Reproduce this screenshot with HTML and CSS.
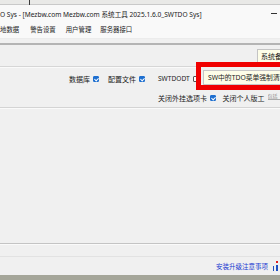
FILE: index.html
```html
<!DOCTYPE html>
<html>
<head>
<meta charset="utf-8">
<link rel="stylesheet" href="styles.css">
</head>
<body>
<div class="screen">
  <div class="topstrip"><span class="tick"></span></div>
  <div class="titlebar">
    <span class="title">O Sys - [Mezbw.com Mezbw.com 系统工具 2025.1.6.0_SWTDO Sys]</span>
    <span class="minimize"></span>
  </div>
  <div class="menubar">
    <span class="menu m1">地数据</span>
    <span class="menu m2">警告设置</span>
    <span class="menu m3">用户管理</span>
    <span class="menu m4">服务器接口</span>
  </div>
  <div class="panel">
    <div class="toolrow">
      <span class="btn">系统备</span>
    </div>
    <div class="sep"></div>
    <div class="optrow row1">
      <span class="lbl first">数据库</span><span class="cb on"></span>
      <span class="lbl">配置文件</span><span class="cb on"></span>
      <span class="lbl latin">SWTDODT</span><span class="cb"></span>
      <div class="redbox"><div class="yellow">SW中的TDO菜单强制清理</div></div>
    </div>
    <div class="optrow row2">
      <span class="lbl first">关闭外挂选项卡</span><span class="cb on"></span>
      <span class="lbl">关闭个人版工</span><span class="hint">包括</span>
    </div>
    <div class="sep2"></div>
    <div class="body"></div>
    <div class="sep3"></div>
    <div class="footer">
      <span class="link">安装升级注意事项</span>
      <span class="flag"><i class="r"></i><i class="b1"></i><i class="b2"></i></span>
    </div>
  </div>
  <div class="taskbar"></div>
</div>
</body>
</html>
```
FILE: styles.css
```css
html, body {
  margin: 0;
  padding: 0;
}
body {
  width: 280px;
  height: 280px;
  overflow: hidden;
  background: #f0f0f0;
  font-family: "Noto Sans", "Noto Sans CJK SC", sans-serif;
  color: #1a1a1a;
}
.screen {
  width: 280px;
  height: 280px;
  display: flex;
  flex-direction: column;
  overflow: hidden;
}
.topstrip {
  height: 4px;
  background: #e9e9e7;
  border-bottom: 1px solid #c9c9c9;
  position: relative;
}
.tick {
  position: absolute;
  left: 29px;
  top: 0;
  width: 1px;
  height: 5px;
  background: #3a3a3a;
}
.titlebar {
  height: 16px;
  background: #f9f9f9;
  display: flex;
  align-items: center;
  justify-content: space-between;
  font-size: 6.6px;
  color: #222;
  white-space: nowrap;
}
.title {
  padding-top: 1px;
}
.minimize {
  width: 6px;
  height: 1px;
  background: #333;
  margin-right: 3px;
}
.menubar {
  height: 17px;
  background: #f9f9f9;
  display: flex;
  align-items: center;
  font-size: 6.4px;
  color: #222;
  white-space: nowrap;
  border-bottom: 1px solid #ececec;
}
.menu.m1 { margin-left: 0; }
.menu.m2 { margin-left: 11px; }
.menu.m3 { margin-left: 10px; }
.menu.m4 { margin-left: 9px; }
.panel {
  flex: 1;
  display: flex;
  flex-direction: column;
  background: #f0f0f0;
  border-top: 2px solid #b4b4b4;
  margin-top: 4px;
}
.toolrow {
  height: 21px;
  display: flex;
  justify-content: flex-end;
  align-items: center;
}
.btn {
  font-size: 7px;
  line-height: 9px;
  background: #fdfde8;
  border: 1px solid #c4c4c4;
  padding: 2px 3px;
  margin-right: -6px;
  margin-top: 1px;
  white-space: nowrap;
}
.sep {
  height: 1px;
  background: #d6d6d6;
  border-bottom: 1px solid #fafafa;
}
.optrow {
  display: flex;
  align-items: center;
  font-size: 7px;
  white-space: nowrap;
  position: relative;
}
.row1 {
  height: 21px;
  padding-left: 69px;
}
.row2 {
  height: 18px;
  padding-left: 158px;
}
.lbl { margin-left: 9px; }
.lbl.first { margin-left: 0; }
.row1 .lbl.latin { margin-left: 13px; font-size: 6.6px; }
.row2 .lbl { margin-left: 7px; }
.row2 .lbl.first { margin-left: 0; }
.cb {
  width: 6px;
  height: 6px;
  margin-left: 3px;
  border: 1px solid #555;
  background: #fff;
  border-radius: 1px;
  box-sizing: border-box;
}
.cb.on {
  background: #1e6fd0;
  border-color: #1e6fd0;
  position: relative;
}
.cb.on::after {
  content: "";
  position: absolute;
  left: 1px;
  top: 0px;
  width: 2px;
  height: 3px;
  border-right: 1px solid #fff;
  border-bottom: 1px solid #fff;
  transform: rotate(45deg);
}
.hint {
  margin-left: 3px;
  font-size: 5px;
  color: #888;
  border-bottom: 1px solid #aaa;
  width: 14px;
  overflow: hidden;
  margin-top: -4px;
}
.redbox {
  position: absolute;
  left: 196px;
  top: -6px;
  width: 84px;
  height: 28px;
  box-sizing: border-box;
  border: 5px solid #f00000;
  border-right: none;
  background: #f0f0f0;
}
.yellow {
  margin: 3px 0 0 2px;
  height: 13px;
  background: #fdfde8;
  border: 1px solid #c6c6c6;
  border-right: none;
  font-size: 6.8px;
  line-height: 13px;
  padding-left: 4px;
  overflow: hidden;
}
.sep2 {
  height: 1px;
  background: #d4d4d4;
  border-bottom: 1px solid #fafafa;
}
.body {
  flex: 1;
}
.sep3 {
  height: 1px;
  background: #c4c4c4;
  border-bottom: 1px solid #fafafa;
}
.footer {
  height: 18px;
  display: flex;
  align-items: center;
  justify-content: flex-end;
  border-top: 1px solid #e2e2e2;
  margin-top: 11px;
}
.link {
  font-size: 6.5px;
  color: #1a3ad0;
  margin-right: 4px;
}
.flag {
  width: 8px;
  height: 12px;
  position: relative;
}
.flag i { position: absolute; display: block; }
.flag .r { left: 4px; top: 1px; width: 2px; height: 2px; background: #e02020; }
.flag .b1 { left: 1px; top: 6px; width: 1px; height: 5px; background: #2050c0; }
.flag .b2 { left: 4px; top: 5px; width: 2px; height: 6px; background: #2050c0; }
.taskbar {
  height: 5px;
  background: #a5a69a;
}
```
